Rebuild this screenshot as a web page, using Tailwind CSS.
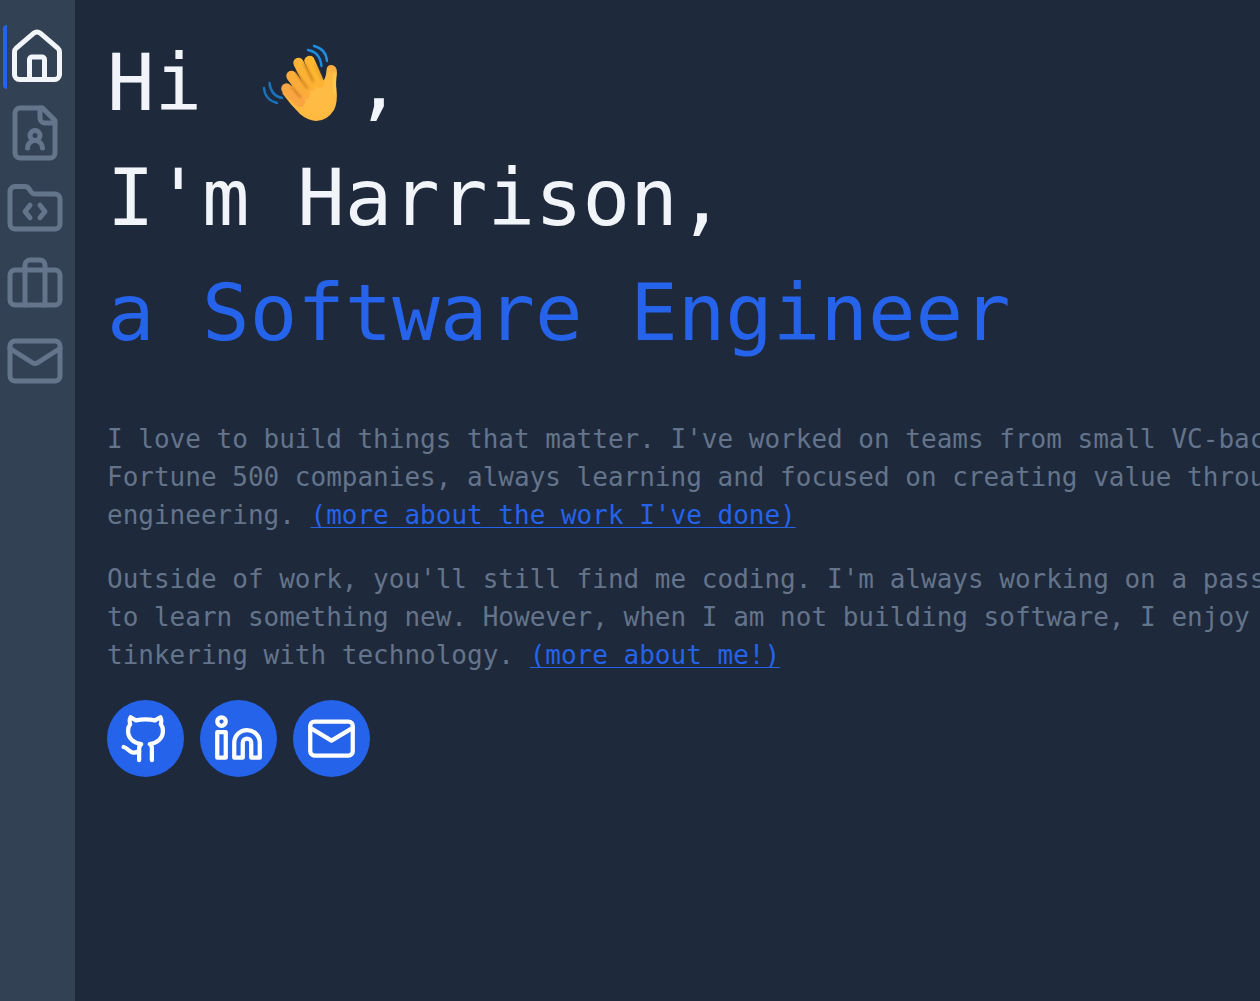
<!DOCTYPE html>
<html lang="en">
<head>
<meta charset="utf-8">
<meta name="viewport" content="width=device-width, initial-scale=1">
<title>Harrison - Software Engineer</title>
<script src="https://cdn.jsdelivr.net/npm/@tailwindcss/browser@4"></script>
</head>
<body class="flex min-h-screen overflow-x-hidden bg-[#1e293b] font-['DejaVu_Sans_Mono',monospace]">
  <!-- Sidebar navigation -->
  <nav aria-label="Main" class="flex w-[75px] shrink-0 flex-col items-center gap-3 bg-[#334155] pt-[25px] pr-[5px] text-[#64748b]">
    <a href="#home" aria-label="Home" aria-current="page" class="rounded-[4px] border-l-4 border-[#2563eb] py-[2px] text-[#f1f5f9]">
      <svg class="size-[60px]" viewBox="0 0 24 24" fill="none" stroke="currentColor" stroke-width="2" stroke-linecap="round" stroke-linejoin="round"><path d="M15 21v-8a1 1 0 0 0-1-1h-4a1 1 0 0 0-1 1v8"/><path d="M3 10a2 2 0 0 1 .709-1.528l7-5.999a2 2 0 0 1 2.582 0l7 5.999A2 2 0 0 1 21 10v9a2 2 0 0 1-2 2H5a2 2 0 0 1-2-2z"/></svg>
    </a>
    <a href="#about" aria-label="About" class="py-[2px]">
      <svg class="size-[60px]" viewBox="0 0 24 24" fill="none" stroke="currentColor" stroke-width="2" stroke-linecap="round" stroke-linejoin="round"><path d="M14 2v4a2 2 0 0 0 2 2h4"/><path d="M15 18a3 3 0 1 0-6 0"/><path d="M15 2H6a2 2 0 0 0-2 2v16a2 2 0 0 0 2 2h12a2 2 0 0 0 2-2V7z"/><circle cx="12" cy="13" r="2"/></svg>
    </a>
    <a href="#projects" aria-label="Projects" class="py-[2px]">
      <svg class="size-[60px]" viewBox="0 0 24 24" fill="none" stroke="currentColor" stroke-width="2" stroke-linecap="round" stroke-linejoin="round"><path d="M10 10.5 8 13l2 2.5"/><path d="m14 10.5 2 2.5-2 2.5"/><path d="M20 20a2 2 0 0 0 2-2V8a2 2 0 0 0-2-2h-7.900a2 2 0 0 1-1.690-.9L9.600 3.900A2 2 0 0 0 7.930 3H4a2 2 0 0 0-2 2v13a2 2 0 0 0 2 2Z"/></svg>
    </a>
    <a href="#work" aria-label="Work" class="py-[2px]">
      <svg class="size-[60px]" viewBox="0 0 24 24" fill="none" stroke="currentColor" stroke-width="2" stroke-linecap="round" stroke-linejoin="round"><path d="M16 20V4a2 2 0 0 0-2-2h-4a2 2 0 0 0-2 2v16"/><rect width="20" height="14" x="2" y="6" rx="2"/></svg>
    </a>
    <a href="#contact" aria-label="Contact" class="py-[2px]">
      <svg class="size-[60px]" viewBox="0 0 24 24" fill="none" stroke="currentColor" stroke-width="2" stroke-linecap="round" stroke-linejoin="round"><rect width="20" height="16" x="2" y="4" rx="2"/><path d="m22 7-8.970 5.700a1.940 1.940 0 0 1-2.060 0L2 7"/></svg>
    </a>
  </nav>

  <main class="min-w-0 flex-1 overflow-hidden pt-[26px] pl-8">
    <h1 class="text-[79px] leading-[115px] whitespace-nowrap text-[#f1f5f9]">
      <span class="flex"><span class="whitespace-pre">Hi </span><svg role="img" aria-label="waving hand" class="mt-[14px] h-[84px] w-[105px]" viewBox="0 0 105 84" fill="none" stroke-linecap="round">
        <defs>
          <radialGradient id="palm" gradientUnits="userSpaceOnUse" cx="67" cy="55" r="42">
            <stop offset="0" stop-color="#ffbd45"/><stop offset=".6" stop-color="#ffb941"/><stop offset=".8" stop-color="#f9a944"/><stop offset="1" stop-color="#e8845a"/>
          </radialGradient>
          <linearGradient id="finger" gradientUnits="userSpaceOnUse" x1="40" y1="40" x2="64" y2="20">
            <stop offset="0" stop-color="#fbab3a"/><stop offset="1" stop-color="#ffb92f"/>
          </linearGradient>
          <filter id="soft" x="-50%" y="-50%" width="200%" height="200%"><feGaussianBlur stdDeviation="1.3"/></filter>
        </defs>
        <g stroke-width="2.400">
          <path d="M58 10Q70 12 71.500 26" stroke="#1c8de0"/><path d="M64 6Q76 9 77 21" stroke="#1c8de0"/>
          <path d="M14 48Q15 60 27 63" stroke="#1a72bb"/><path d="M19.500 43Q21 56 32 58" stroke="#1a72bb"/>
        </g>
        <path d="M32 53L44 44L60 38L73 41C75 39 76 36 76.500 30Q77 24.500 82 25Q87.500 26 87 34Q85.500 43 86.500 49Q88 62 84 70Q77 81 66 81Q57 80 50 74Q40 64 32 53Z" fill="url(#palm)"/>
        <g stroke="url(#finger)" stroke-width="10.500">
          <path d="M59.500 21L69 43"/><path d="M48.500 23L60 46"/><path d="M41.500 36L55 54"/><path d="M36.500 48.500L50 62" stroke="#f9a542"/>
        </g>
        <g stroke="#b86f16" stroke-opacity=".75" stroke-width="1.800" filter="url(#soft)">
          <path d="M54.500 24L63 41"/><path d="M46.500 33L57 48"/><path d="M42 47L50 57"/>
        </g>
        <path d="M65 25L71.500 39" stroke="#e09a24" stroke-width="1.500" filter="url(#soft)"/>
        <path d="M85 34Q83 44 85 53" stroke="#ffd755" stroke-width="2" filter="url(#soft)"/>
      </svg><span>,</span></span>
      <span class="block">I'm Harrison,</span>
      <span class="block text-[#2563eb]">a Software Engineer</span>
    </h1>

    <div class="mt-[49px] flex flex-col gap-[26px] text-[26px] leading-[38px] whitespace-nowrap text-[#64748b]">
      <p>I love to build things that matter. I've worked on teams from small VC-backed startups to<br>Fortune 500 companies, always learning and focused on creating value through software<br>engineering. <a href="#work" class="text-[#2563eb] underline decoration-1 underline-offset-[3px]">(more about the work I've done)</a></p>
      <p>Outside of work, you'll still find me coding. I'm always working on a passion project or trying<br>to learn something new. However, when I am not building software, I enjoy the outdoors and<br>tinkering with technology. <a href="#about" class="text-[#2563eb] underline decoration-1 underline-offset-[3px]">(more about me!)</a></p>
      <div class="flex gap-4 text-white">
        <a href="#github" aria-label="GitHub" class="flex size-[77px] items-center justify-center rounded-full bg-[#2563eb]">
          <svg class="size-[51px]" viewBox="0 0 24 24" fill="none" stroke="currentColor" stroke-width="2" stroke-linecap="round" stroke-linejoin="round"><path d="M15 22.200V16.500Q15 15.200 14 14.600C17.500 14.200 20.200 12 20.200 8.500C20.200 7 19.800 6 19.200 5.200C19.600 4 19.500 2.900 19 2L16.500 3.500Q12 2.400 7.500 3.500L5 2C4.500 2.900 4.400 4 4.800 5.200C4.200 6 3.800 7 3.800 8.500C3.800 12 6.500 14.200 10 14.600Q9 15.400 9 16.800V22.200"/><path d="M1.700 16C3.500 16.300 4 18.400 6.200 18.600Q7.600 18.700 9 18"/></svg>
        </a>
        <a href="#linkedin" aria-label="LinkedIn" class="flex size-[77px] items-center justify-center rounded-full bg-[#2563eb]">
          <svg class="size-[51px]" viewBox="0 0 24 24" fill="none" stroke="currentColor" stroke-width="2" stroke-linecap="round" stroke-linejoin="round"><path d="M16 8a6 6 0 0 1 6 6v7h-4v-7a2 2 0 0 0-4 0v7h-4v-7a6 6 0 0 1 6-6z"/><rect width="4" height="12" x="2" y="9"/><circle cx="4" cy="4" r="2"/></svg>
        </a>
        <a href="#email" aria-label="Email" class="flex size-[77px] items-center justify-center rounded-full bg-[#2563eb]">
          <svg class="size-[51px]" viewBox="0 0 24 24" fill="none" stroke="currentColor" stroke-width="2" stroke-linecap="round" stroke-linejoin="round"><rect width="20" height="16" x="2" y="4" rx="2"/><path d="m22 7-10 6L2 7"/></svg>
        </a>
      </div>
    </div>
  </main>
</body>
</html>
